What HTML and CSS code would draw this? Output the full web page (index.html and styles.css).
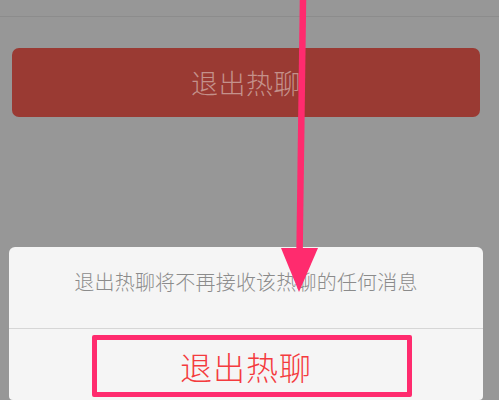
FILE: index.html
```html
<!DOCTYPE html>
<html lang="zh-CN">
<head>
<meta charset="utf-8">
<link rel="stylesheet" href="styles.css">
</head>
<body>
<div class="screen">
  <div class="topline"></div>
  <div class="danger-btn">退出热聊</div>
  <div class="sheet">
    <div class="sheet-msg">退出热聊将不再接收该热聊的任何消息</div>
    <div class="sheet-action">
      <div class="highlight">退出热聊</div>
    </div>
  </div>
  <svg class="arrow" width="499" height="400" viewBox="0 0 499 400">
    <line x1="303" y1="-2" x2="299.5" y2="256" stroke="#ff2b6e" stroke-width="6.5"/>
    <polygon points="281,248 318,248 299,292" fill="#ff2b6e"/>
  </svg>
</div>
</body>
</html>
```
FILE: styles.css
```css
html, body {
  margin: 0;
  padding: 0;
}
body {
  background: #979797;
  font-family: "Noto Sans CJK SC", "Noto Sans", sans-serif;
  font-weight: 300;
}
.screen {
  position: relative;
  width: 499px;
  height: 400px;
  overflow: hidden;
  display: flex;
  flex-direction: column;
}
.topline {
  height: 16px;
  border-bottom: 1px solid #8c8c8c;
  flex: none;
}
.danger-btn {
  margin: 31px 19px 0 12px;
  height: 69px;
  border-radius: 7px;
  background: #9a3a33;
  color: #c4918b;
  font-size: 27px;
  display: flex;
  align-items: center;
  justify-content: center;
  letter-spacing: 0.5px;
  flex: none;
}
.sheet {
  margin: 130px 16px 0 9px;
  background: #f5f5f5;
  border-radius: 6px 6px 4px 4px;
  flex: 1;
  display: flex;
  flex-direction: column;
}
.sheet-msg {
  height: 82px;
  border-bottom: 1px solid #d6d6d6;
  color: #8b8b8b;
  font-size: 20px;
  display: flex;
  justify-content: center;
  padding-top: 22px;
  box-sizing: border-box;
  line-height: 26px;
  letter-spacing: 0.2px;
}
.sheet-action {
  display: flex;
  padding: 6px 0 0 83px;
}
.highlight {
  width: 298px;
  height: 52px;
  padding-right: 12px;
  border: 5px solid #ff2b6e;
  border-radius: 2px;
  color: #f43b3e;
  font-size: 32px;
  display: flex;
  align-items: center;
  justify-content: center;
  letter-spacing: 1px;
}
.arrow {
  position: absolute;
  left: 0;
  top: 0;
}
```
